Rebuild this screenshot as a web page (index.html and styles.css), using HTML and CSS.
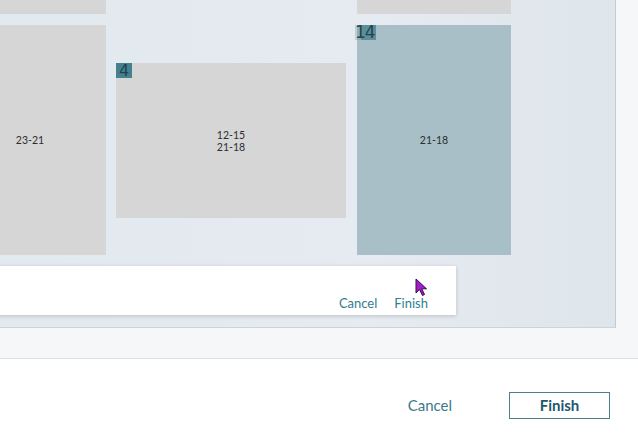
FILE: index.html
```html
<!DOCTYPE html>
<html>
<head>
<meta charset="utf-8">
<link rel="stylesheet" href="styles.css">
</head>
<body>
<div class="workspace">
  <div class="canvas">
    <div class="tile grey t1"></div>
    <div class="tile grey t2"></div>
    <div class="tile grey t3"><span class="label">23-21</span></div>
    <div class="tile grey t4"><span class="badge b4">4</span><span class="label">12-15<br>21-18</span></div>
    <div class="tile blue t5"><span class="badge b14">14</span><span class="label">21-18</span></div>
    <div class="popup">
      <span class="plink">Cancel</span>
      <span class="plink">Finish</span>
    </div>
    <svg class="cursor" width="14" height="19" viewBox="0 0 14 19"><path d="M1 1 L1 15 L4.5 11.5 L7.5 17.5 L9.5 16.5 L6.8 10.8 L11.5 10.8 Z" fill="#a020c8" stroke="#3a0a4a" stroke-width="1"/></svg>
  </div>
</div>
<div class="footer">
  <span class="flink">Cancel</span>
  <span class="fbtn">Finish</span>
</div>
</body>
</html>
```
FILE: styles.css
```css
html, body { margin: 0; padding: 0; }
body {
  width: 638px; height: 446px; overflow: hidden;
  font-family: Lato, "Open Sans", sans-serif;
  background: #ffffff;
}
.workspace {
  height: 359px;
  background: #f6f7f8;
  border-bottom: 1px solid #dfe2e5;
  box-sizing: border-box;
}
.canvas {
  position: relative;
  width: 616px; height: 328px;
  box-sizing: border-box;
  background: linear-gradient(90deg, #e2e9ef 0%, #e5ebf0 60%, #dfe6eb 100%);
  border-right: 1px solid #c5ccd1;
  border-bottom: 1px solid #cdd4d9;
  overflow: hidden;
}
.tile {
  position: absolute;
  display: flex; align-items: center; justify-content: center;
}
.grey { background: #d6d6d7; }
.blue { background: #a8bfc7; }
.t1 { left: -46px; top: -10px; width: 152px; height: 24px; }
.t2 { left: 357px; top: -10px; width: 154px; height: 24px; }
.t3 { left: -46px; top: 25px; width: 152px; height: 230px; }
.t4 { left: 116px; top: 63px; width: 230px; height: 155px; }
.t5 { left: 357px; top: 25px; width: 154px; height: 230px; }
.label {
  font-size: 10.5px; line-height: 12px; color: #2a2e31; text-align: center;
}
.badge {
  position: absolute; top: 0;
  font-family: "DejaVu Sans", sans-serif;
  color: #1f4450; background: #44808d;
  font-size: 16px; line-height: 15px; height: 15px;
}
.b4 { left: 0; width: 16px; text-align: center; }
.b14 { left: -2px; top: 0; width: 21px; font-size: 17px; letter-spacing: -1px; background: linear-gradient(90deg, rgba(68,128,141,0.25) 0 30%, #5b8f9b 30% 100%); color: #27424a; }
.popup {
  position: absolute; left: -4px; top: 266px; width: 460px; height: 49px;
  background: #ffffff;
  box-shadow: 0 1px 4px rgba(0,0,0,0.18);
  display: flex; justify-content: flex-end; align-items: flex-end;
  gap: 17px; padding: 0 28px 4px 0; box-sizing: border-box;
}
.plink { font-size: 13px; color: #2f7e8f; line-height: 16px; }
.cursor { position: absolute; left: 415px; top: 278px; }
.footer {
  height: 86px;
  display: flex; justify-content: flex-end; align-items: center;
  padding: 6px 28px 0 0; box-sizing: border-box;
  gap: 57px;
}
.flink { font-size: 15px; color: #3a7a8a; }
.fbtn {
  width: 101px; height: 27px; box-sizing: border-box;
  border: 1.5px solid #4a8190;
  display: flex; align-items: center; justify-content: center;
  font-size: 15px; font-weight: bold; color: #1d586b;
}
```
